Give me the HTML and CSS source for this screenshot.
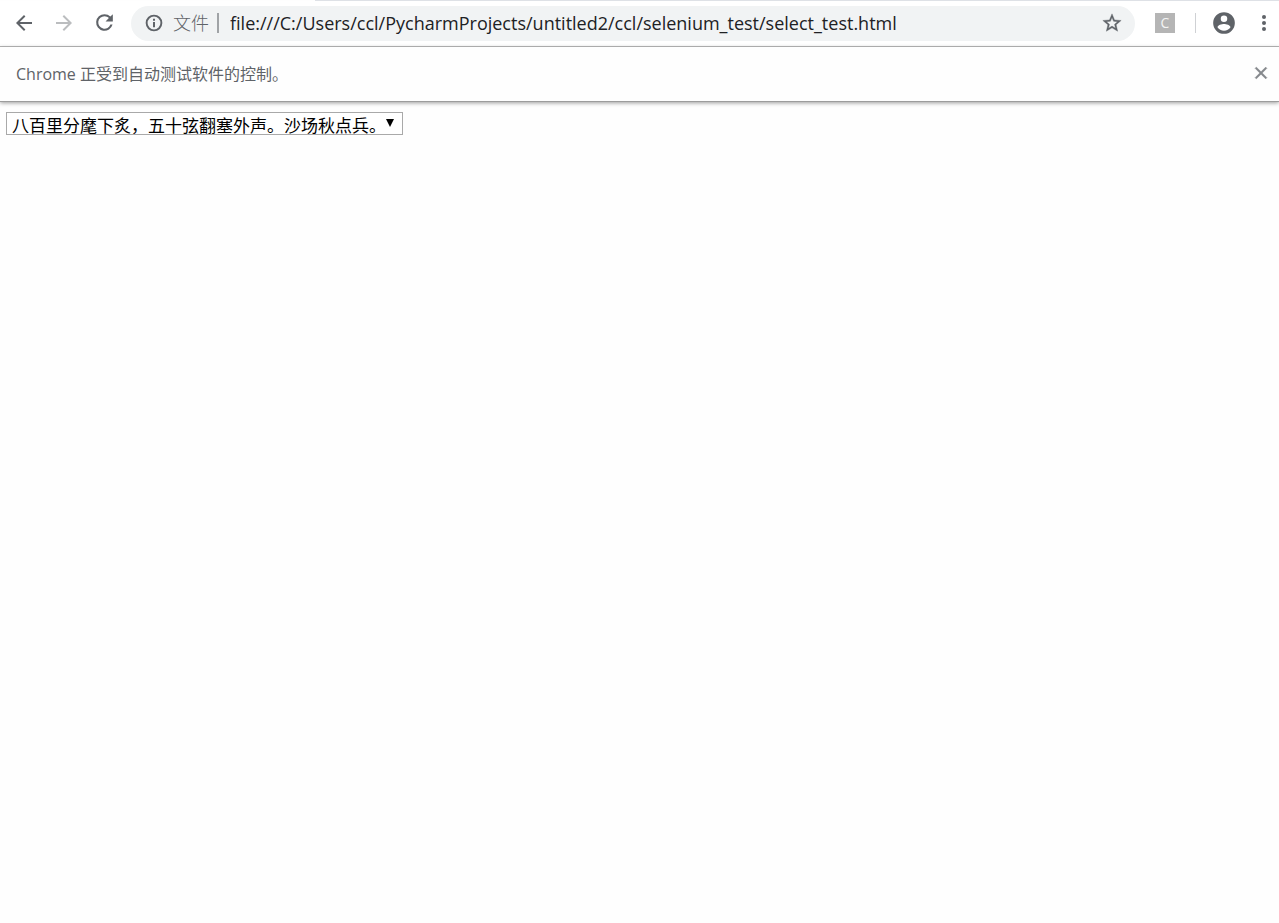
FILE: index.html
```html
<!DOCTYPE html>
<html lang="zh-CN">
<head>
<meta charset="utf-8">
<title>select_test.html</title>
<link rel="stylesheet" href="styles.css">
</head>
<body>
<header class="browser">
  <div class="tab-edge"></div>
  <div class="toolbar">
    <nav class="nav">
      <button class="icon-button" type="button" aria-label="后退">
        <svg width="24" height="24" viewBox="0 0 24 24"><path d="M20 11H7.83l5.59-5.59L12 4l-8 8 8 8 1.41-1.41L7.83 13H20v-2z"/></svg>
      </button>
      <button class="icon-button icon-button--off" type="button" aria-label="前进" disabled>
        <svg width="24" height="24" viewBox="0 0 24 24"><path d="M12 4l-1.41 1.41L16.17 11H4v2h12.17l-5.58 5.59L12 20l8-8z"/></svg>
      </button>
      <button class="icon-button" type="button" aria-label="重新加载">
        <svg width="25" height="25" viewBox="0 0 24 24"><path d="M17.65 6.35A7.96 7.96 0 0 0 12 4a8 8 0 1 0 7.73 10h-2.08A6 6 0 1 1 12 6c1.66 0 3.14.69 4.22 1.78L13 11h7V4l-2.35 2.35z"/></svg>
      </button>
    </nav>
    <div class="omnibox">
      <svg class="info" width="20" height="20" viewBox="0 0 24 24"><path d="M10.8 6.8h2.4v2.4h-2.4zm0 4h2.4v6.4h-2.4zM12 2a10 10 0 1 0 0 20 10 10 0 0 0 0-20zm0 17.7a7.7 7.7 0 1 1 0-15.4 7.7 7.7 0 0 1 0 15.4z"/></svg>
      <label class="scheme" for="url">文件</label>
      <input class="url" id="url" type="text" spellcheck="false" value="file:///C:/Users/ccl/PycharmProjects/untitled2/ccl/selenium_test/select_test.html">
      <button class="icon-button icon-button--star" type="button" aria-label="加入书签">
        <svg width="22" height="22" viewBox="0 0 24 24"><path stroke="currentColor" stroke-width=".4" d="M22 9.24l-7.19-.62L12 2 9.19 8.63 2 9.24l5.46 4.73L5.82 21 12 17.27 18.18 21l-1.63-7.03L22 9.24zM12 15.4l-3.76 2.27 1-4.28-3.32-2.88 4.38-.38L12 6.1l1.71 4.04 4.38.38-3.32 2.88 1 4.28L12 15.4z"/></svg>
      </button>
    </div>
    <div class="actions">
      <button class="extension" type="button">C</button>
      <span class="divider"></span>
      <button class="icon-button" type="button" aria-label="用户">
        <svg width="26" height="26" viewBox="0 0 24 24"><path d="M12 2a10 10 0 1 0 0 20 10 10 0 0 0 0-20zm0 3a3 3 0 1 1 0 6 3 3 0 0 1 0-6zm0 14.2a7.2 7.2 0 0 1-6-3.22c.03-1.99 4-3.08 6-3.08s5.97 1.09 6 3.08a7.2 7.2 0 0 1-6 3.22z"/></svg>
      </button>
      <button class="icon-button icon-button--menu" type="button" aria-label="菜单">
        <svg width="24" height="24" viewBox="0 0 24 24"><circle cx="12" cy="6" r="2"/><circle cx="12" cy="12" r="2"/><circle cx="12" cy="18" r="2"/></svg>
      </button>
    </div>
  </div>
  <div class="infobar">
    <span>Chrome 正受到自动测试软件的控制。</span>
    <button class="icon-button icon-button--close" type="button" aria-label="关闭">
      <svg width="20" height="20" viewBox="0 0 24 24"><path stroke="currentColor" stroke-width=".8" d="M19 6.41L17.59 5 12 10.59 6.41 5 5 6.41 10.59 12 5 17.59 6.41 19 12 13.41 17.59 19 19 17.59 13.41 12z"/></svg>
    </button>
  </div>
</header>
<main class="page">
  <div class="select-box">
    <select class="select" aria-label="诗句">
      <option>八百里分麾下炙，五十弦翻塞外声。沙场秋点兵。</option>
    </select>
    <svg class="arrow" width="8" height="8" viewBox="0 0 8 8"><path d="M0 0h8L4 8z"/></svg>
  </div>
</main>
</body>
</html>
```

FILE: styles.css
```css
* {
  box-sizing: border-box;
}

body {
  margin: 0;
  background: #fefefe;
  color: #202124;
  font-family: "Open Sans", "Noto Sans CJK SC", sans-serif;
}

button,
input,
select {
  margin: 0;
  padding: 0;
  border: 0;
  background: none;
  color: inherit;
  font-family: inherit;
}

svg {
  display: block;
  fill: currentColor;
}

.tab-edge {
  height: 1px;
  margin-left: 315px;
  background: #dee1e6;
}

.toolbar {
  display: flex;
  align-items: center;
  height: 46px;
  padding: 0 3px 0 12px;
  border-bottom: 1px solid #b0b0b0;
  background: #fff;
}

.nav {
  display: flex;
  align-items: center;
  gap: 16px;
  margin-right: 14px;
  padding-bottom: 2px;
}

.icon-button {
  flex: none;
  color: #5f6368;
}

.icon-button--off {
  color: #bbbdbf;
}

.omnibox {
  display: flex;
  flex: 1;
  align-items: center;
  min-width: 0;
  height: 35px;
  padding: 0 12px 1px 13px;
  border-radius: 18px;
  background: #f1f3f4;
}

.info {
  flex: none;
  color: #5f6368;
}

.scheme {
  flex: none;
  margin-left: 9px;
  padding-right: 8px;
  border-right: 2px solid #a0a3a6;
  color: #5f6368;
  font-size: 18px;
  font-weight: 300;
  line-height: 20px;
}

.url {
  flex: 1;
  min-width: 0;
  height: 26px;
  margin-left: 11px;
  outline: 0;
  font-size: 18px;
}

.actions {
  display: flex;
  align-items: center;
  margin-left: 20px;
  padding-bottom: 2px;
}

.extension {
  width: 20px;
  height: 20px;
  background: #b5b5b5;
  color: #f4f4f4;
  font-size: 14px;
  line-height: 20px;
}

.divider {
  width: 1px;
  height: 20px;
  margin: 0 15px 0 20px;
  background: #cfd1d4;
}

.icon-button--menu {
  margin-left: 15px;
}

.infobar {
  display: flex;
  align-items: center;
  justify-content: space-between;
  height: 55px;
  padding: 0 8px 2px 16px;
  border-bottom: 1px solid #9c9c9c;
  box-shadow: 0 1px 4px #9c9c9c;
  color: #5f6368;
  font-size: 16px;
}

.icon-button--close {
  color: #85888c;
}

.page {
  padding: 10px 6px;
}

.select-box {
  position: relative;
  width: 397px;
  max-width: 100%;
}

.select {
  display: block;
  width: 100%;
  height: 23px;
  padding: 1px 16px 0 5px;
  border: 1px solid #a9a9a9;
  appearance: none;
  background: #fff;
  color: #000;
  font-size: 17px;
}

.arrow {
  position: absolute;
  top: 7px;
  right: 9px;
  color: #000;
  pointer-events: none;
}
```
